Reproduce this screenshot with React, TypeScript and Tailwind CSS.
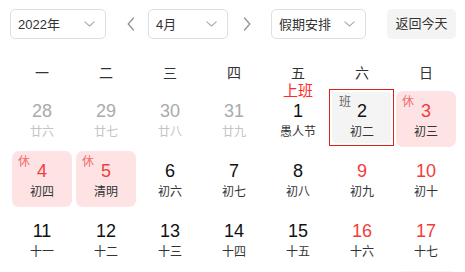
import React from "react";

type Day = {
  d: number;
  lunar: string;
  kind: "prev" | "cur" | "next";
  weekend?: boolean;
  tag?: "休" | "班";
  selected?: boolean;
  above?: string;
};

const lunarApr = [
  "愚人节", "初二", "初三", "初四", "清明", "初六", "初七", "初八", "初九", "初十",
  "十一", "十二", "十三", "十四", "十五", "十六", "十七", "十八", "十九", "谷雨",
  "廿一", "廿二", "廿三", "廿四", "廿五", "廿六", "廿七", "廿八", "廿九", "三十",
];

function buildDays(): Day[] {
  const days: Day[] = [];
  ["廿六", "廿七", "廿八", "廿九"].forEach((l, i) => days.push({ d: 28 + i, lunar: l, kind: "prev" }));
  for (let i = 1; i <= 24; i++) {
    const col = (i + 3) % 7;
    const day: Day = { d: i, lunar: lunarApr[i - 1], kind: "cur", weekend: col === 5 || col === 6 };
    if (i === 3 || i === 4 || i === 5) day.tag = "休";
    if (i === 2 || i === 24) day.tag = "班";
    if (i === 2) day.selected = true;
    if (i === 1) day.above = "上班";
    days.push(day);
  }
  return days;
}

const Chevron = () => (
  <svg width="11" height="6" viewBox="0 0 11 6" fill="none">
    <path d="M0.8 0.8 L5.5 5 L10.2 0.8" stroke="#a8abb2" strokeWidth="1.1" strokeLinecap="round" strokeLinejoin="round" />
  </svg>
);

function Select({ label, w }: { label: string; w: string }) {
  return (
    <div className={`${w} h-[30px] flex items-center justify-between border border-[#dcdfe6] rounded-[5px] pl-[7px] pr-[10px] bg-white`}>
      <span className="text-[13px] text-[#333] leading-none">{label}</span>
      <Chevron />
    </div>
  );
}

const Arrow = ({ dir }: { dir: "l" | "r" }) => (
  <svg width="8" height="14" viewBox="0 0 8 14" fill="none">
    <path
      d={dir === "l" ? "M6.5 1 L1.2 7 L6.5 13" : "M1.5 1 L6.8 7 L1.5 13"}
      stroke="#909399"
      strokeWidth="1.3"
      strokeLinecap="round"
      strokeLinejoin="round"
    />
  </svg>
);

function Cell({ day, bgOnly }: { day: Day; bgOnly?: boolean }) {
  let numColor = "text-[#111]";
  let lunarColor = "text-[#333]";
  if (day.kind !== "cur") {
    numColor = "text-[#aaaaaa]";
    lunarColor = "text-[#c4c4c4]";
  } else if (day.tag === "休" || (day.weekend && day.tag !== "班")) {
    numColor = "text-[#f33b3b]";
  }
  return (
    <div className="relative h-[60px] w-[64px]">
      {day.selected ? (
        <>
          <div className="absolute left-[-1px] top-0 w-[65px] h-[57px] border border-[#e0201f]" />
          <div className="absolute left-[2px] top-[3px] w-[59px] h-[51px] rounded-[4px] bg-[#f4f4f4]" />
        </>
      ) : day.tag === "休" && day.kind === "cur" ? (
        <div className="absolute left-[2px] top-[2px] w-[60px] h-[56px] rounded-[7px] bg-[#fde3e3]" />
      ) : day.tag === "班" ? (
        <div className="absolute left-[2px] top-[2px] w-[60px] h-[56px] rounded-[7px] bg-[#f4f4f4]" />
      ) : null}
      {!bgOnly && day.tag && day.kind === "cur" && (
        <span
          className={`absolute top-[6px] text-[12px] leading-[14px] ${
            day.tag === "休" ? "left-[8px] text-[#f56c6c]" : "left-[9px] text-[#666]"
          }`}
        >
          {day.tag}
        </span>
      )}
      {!bgOnly && day.above && (
        <span className="absolute left-0 right-0 top-[-6px] text-center text-[15px] leading-[16px] text-[#ff2a2a]">
          {day.above}
        </span>
      )}
      {!bgOnly && (
        <div className="relative flex flex-col items-center pt-[12px]">
          <span className={`text-[18px] leading-[21px] ${numColor}`}>{day.d}</span>
          <span className={`text-[12px] leading-[20px] ${lunarColor}`}>{day.lunar}</span>
        </div>
      )}
    </div>
  );
}

export default function App() {
  const days = buildDays();
  const weeks = ["一", "二", "三", "四", "五", "六", "日"];
  return (
    <div
      className="w-[465px] h-[272px] overflow-hidden bg-white"
      style={{ fontFamily: '"Liberation Sans", "Noto Sans CJK SC", sans-serif' }}
    >
      <div className="pl-[10px] pt-[9px]">
        <div className="flex items-center h-[30px]">
          <Select label="2022年" w="w-[96px]" />
          <div className="ml-[21px]">
            <Arrow dir="l" />
          </div>
          <div className="ml-[13px]">
            <Select label="4月" w="w-[80px]" />
          </div>
          <div className="ml-[15px]">
            <Arrow dir="r" />
          </div>
          <div className="ml-[20px]">
            <Select label="假期安排" w="w-[95px]" />
          </div>
          <div className="ml-[21px] w-[69px] h-[30px] rounded-[5px] bg-[#f4f4f5] flex items-center justify-center text-[13px] text-[#333]">
            返回今天
          </div>
        </div>
        <div className="grid grid-cols-[repeat(7,64px)] mt-[17px] h-[33px] items-center">
          {weeks.map((w) => (
            <div key={w} className="text-center text-[14px] text-[#333] leading-[20px]">
              {w}
            </div>
          ))}
        </div>
        <div className="grid grid-cols-[repeat(7,64px)]">
          {days.map((d, i) => (
            <Cell key={i} day={d} bgOnly={i >= 21} />
          ))}
        </div>
      </div>
    </div>
  );
}
